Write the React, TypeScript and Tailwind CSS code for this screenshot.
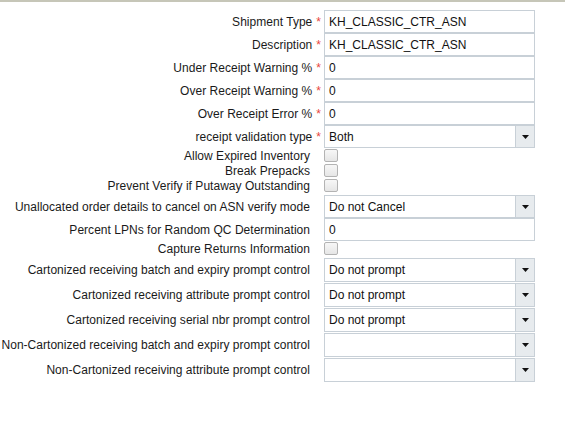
import React from "react";

type Row =
    | { kind: "text"; label: string; required?: boolean; value: string; h?: number }
    | { kind: "select"; label: string; required?: boolean; value: string; h?: number; mt?: boolean }
    | { kind: "check"; label: string; mt?: boolean };

const rows: Row[] = [
    { kind: "text", label: "Shipment Type", required: true, value: "KH_CLASSIC_CTR_ASN" },
    { kind: "text", label: "Description", required: true, value: "KH_CLASSIC_CTR_ASN" },
    { kind: "text", label: "Under Receipt Warning %", required: true, value: "0" },
    { kind: "text", label: "Over Receipt Warning %", required: true, value: "0" },
    { kind: "text", label: "Over Receipt Error %", required: true, value: "0" },
    { kind: "select", label: "receipt validation type", required: true, value: "Both" },
    { kind: "check", label: "Allow Expired Inventory" },
    { kind: "check", label: "Break Prepacks" },
    { kind: "check", label: "Prevent Verify if Putaway Outstanding" },
    { kind: "select", label: "Unallocated order details to cancel on ASN verify mode", value: "Do not Cancel", mt: true },
    { kind: "text", label: "Percent LPNs for Random QC Determination", value: "0" },
    { kind: "check", label: "Capture Returns Information" },
    { kind: "select", label: "Cartonized receiving batch and expiry prompt control", value: "Do not prompt", h: 24, mt: true },
    { kind: "select", label: "Cartonized receiving attribute prompt control", value: "Do not prompt", h: 24 },
    { kind: "select", label: "Cartonized receiving serial nbr prompt control", value: "Do not prompt", h: 24 },
    { kind: "select", label: "Non-Cartonized receiving batch and expiry prompt control", value: "", h: 24 },
    { kind: "select", label: "Non-Cartonized receiving attribute prompt control", value: "", h: 24 },
];

function Label({ text, required }: { text: string; required?: boolean }) {
    return (
        <div className={required ? "w-[324px] shrink-0 flex justify-end items-center pr-[3px]" : "w-[324px] shrink-0 flex justify-end items-center pr-[14px]"}>
            <span className="whitespace-nowrap tracking-[0.03px]">{text}</span>
            {required && <span className="ml-[4px] text-[#e8453c]">*</span>}
        </div>
    );
}

function Arrow() {
    return (
        <div className="w-[19px] h-full shrink-0 border-l border-[#c8d0d7] bg-[#e7ebee] flex items-center justify-center">
            <svg width="7" height="4" viewBox="0 0 7 4">
                <polygon points="0,0 7,0 3.5,4" fill="#111" />
            </svg>
        </div>
    );
}

export default function App() {
    return (
        <div className="w-[565px] h-[441px] bg-white text-[12px] text-[#1a1a1a] overflow-hidden" style={{ fontFamily: '"Liberation Sans", Arial, sans-serif' }}>
            <div className="h-[2px] bg-[#c6c6b8]" />
            <div className="pt-[8px] flex flex-col">
                {rows.map((r, i) => {
                    if (r.kind === "check") {
                        return (
                            <div key={i} className="flex h-[15px] items-center">
                                <Label text={r.label} />
                                <div className="w-[14px] h-[13px] rounded-[2px] border border-[#b3b3b3] bg-gradient-to-b from-[#f7f7f7] to-[#e6e6e6]" />
                            </div>
                        );
                    }
                    const h = r.h === 24 ? "h-[24px] mb-[1px]" : "h-[23px]";
                    return (
                        <div key={i} className={`flex ${h} ${r.mt ? "mt-[2px]" : ""}`}>
                            <Label text={r.label} required={r.required} />
                            <div className="w-[211px] h-full flex border border-[#c8d0d7] bg-white">
                                <div className="flex-1 flex items-center pl-[4px] text-[#111] whitespace-nowrap">{r.value}</div>
                                {r.kind === "select" && <Arrow />}
                            </div>
                        </div>
                    );
                })}
            </div>
        </div>
    );
}
